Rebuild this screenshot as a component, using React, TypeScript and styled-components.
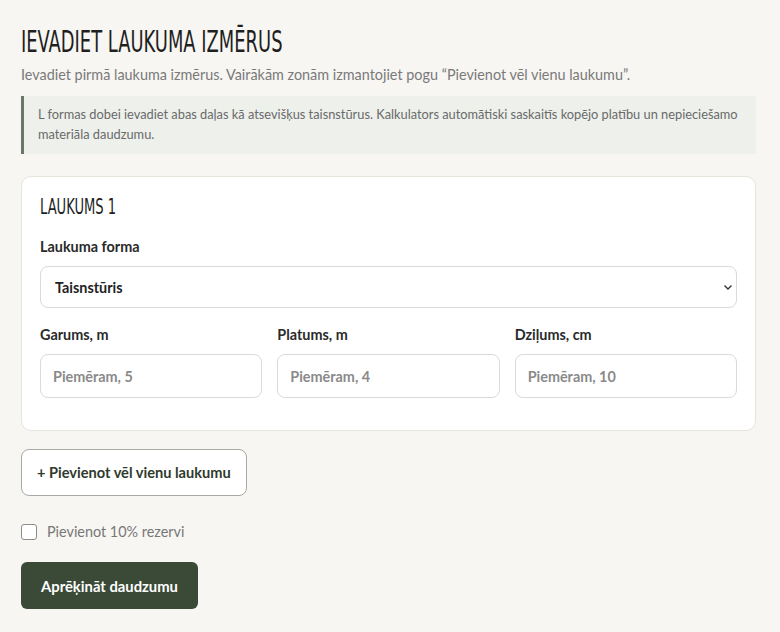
import React from "react";
import styled, { createGlobalStyle } from "styled-components";

const Global = createGlobalStyle`
  html, body { margin: 0; padding: 0; background: #f7f6f2; }
  body { font-family: Lato, "Open Sans", sans-serif; color: #2a2a2a; }
  * { box-sizing: border-box; }
`;

const Page = styled.div`
  padding: 23px 24px 24px 21px;
  width: 780px;
  display: flex;
  flex-direction: column;
`;

const Title = styled.h1`
  margin: 0;
  font-family: "DejaVu Sans Condensed", "DejaVu Sans", sans-serif;
  font-stretch: condensed;
  font-weight: 400;
  font-size: 31px;
  line-height: 37px;
  color: #1f1f1f;
`;

const Squeeze = styled.span<{ $x: number }>`
  display: inline-block;
  white-space: nowrap;
  transform: scaleX(${(p) => p.$x});
  transform-origin: left center;
`;

const Lead = styled.p`
  margin: 5px 0 0;
  font-size: 14.4px;
  line-height: 20px;
  color: #7a7a7a;
`;

const Notice = styled.div`
  margin-top: 11px;
  background: #edf0eb;
  border-left: 3px solid #6b7766;
  padding: 9px 16px 10px 14px;
  font-size: 12.8px;
  line-height: 19.5px;
  color: #6a6a6a;
`;

const Card = styled.section`
  margin-top: 22px;
  background: #fff;
  border: 1px solid #e7e4dd;
  border-radius: 10px;
  padding: 16px 18px 32px;
  display: flex;
  flex-direction: column;
`;

const CardTitle = styled.h2`
  margin: 0;
  font-family: "DejaVu Sans Condensed", "DejaVu Sans", sans-serif;
  font-stretch: condensed;
  font-weight: 400;
  font-size: 22px;
  line-height: 28px;
  color: #1f1f1f;
`;

const Field = styled.div<{ $top?: number }>`
  display: flex;
  flex-direction: column;
  gap: 9px;
  min-width: 0;
  margin-top: ${(p) => p.$top ?? 0}px;
`;

const Label = styled.label`
  font-size: 14.4px;
  font-weight: 700;
  line-height: 20px;
  color: #2a2a2a;
`;

const SelectBox = styled.div`
  position: relative;
  height: 42px;
  border: 1px solid #dcdad4;
  border-radius: 8px;
  display: flex;
  align-items: center;
  padding: 0 14px;
  font-size: 14.4px;
  font-weight: 700;
  color: #222;
`;

const Chevron = styled.svg`
  position: absolute;
  right: 3px;
  top: 50%;
  margin-top: -4px;
`;

const Grid = styled.div`
  display: grid;
  grid-template-columns: repeat(3, 1fr);
  gap: 15px;
  margin-top: 17px;
`;

const Input = styled.input`
  height: 44px;
  width: 100%;
  border: 1px solid #dcdad4;
  border-radius: 8px;
  padding: 0 12px;
  font-family: Lato, sans-serif;
  font-size: 14.4px;
  font-weight: 700;
  color: #222;
  background: #fff;
  outline: none;
  &::placeholder { color: #8a8a8a; }
`;

const OutlineButton = styled.button`
  margin-top: 18px;
  align-self: flex-start;
  height: 47px;
  padding: 0 15px;
  background: #fff;
  border: 1px solid #a9aaa4;
  border-radius: 8px;
  font-family: Lato, sans-serif;
  font-size: 14.6px;
  font-weight: 700;
  color: #2f3a2d;
`;

const CheckRow = styled.label`
  margin-top: 26px;
  display: flex;
  align-items: center;
  gap: 10px;
  font-size: 14.4px;
  color: #777;
  line-height: 20px;
`;

const Box = styled.span`
  width: 16px;
  height: 16px;
  border: 1px solid #8c8c8c;
  border-radius: 3px;
  background: #fff;
`;

const PrimaryButton = styled.button`
  margin-top: 20px;
  align-self: flex-start;
  height: 47px;
  padding: 0 20px;
  background: #3a4a37;
  border: none;
  border-radius: 6px;
  font-family: Lato, sans-serif;
  font-size: 14.8px;
  font-weight: 700;
  color: #fff;
`;

export default function App() {
  return (
    <>
      <Global />
      <Page>
        <Title><Squeeze $x={0.642}>IEVADIET LAUKUMA IZMĒRUS</Squeeze></Title>
        <Lead>Ievadiet pirmā laukuma izmērus. Vairākām zonām izmantojiet pogu “Pievienot vēl vienu laukumu”.</Lead>
        <Notice>
          L formas dobei ievadiet abas daļas kā atsevišķus taisnstūrus. Kalkulators automātiski saskaitīs kopējo platību un nepieciešamo materiāla daudzumu.
        </Notice>
        <Card>
          <CardTitle><Squeeze $x={0.663}>LAUKUMS 1</Squeeze></CardTitle>
          <Field $top={16}>
            <Label>Laukuma forma</Label>
            <SelectBox>
              Taisnstūris
              <Chevron width="10" height="8" viewBox="0 0 10 8">
                <path d="M1.5 2.5 L5 6 L8.5 2.5" fill="none" stroke="#333" strokeWidth="1.4" />
              </Chevron>
            </SelectBox>
          </Field>
          <Grid>
            <Field>
              <Label>Garums, m</Label>
              <Input placeholder="Piemēram, 5" />
            </Field>
            <Field>
              <Label>Platums, m</Label>
              <Input placeholder="Piemēram, 4" />
            </Field>
            <Field>
              <Label>Dziļums, cm</Label>
              <Input placeholder="Piemēram, 10" />
            </Field>
          </Grid>
        </Card>
        <OutlineButton>+ Pievienot vēl vienu laukumu</OutlineButton>
        <CheckRow>
          <Box />
          Pievienot 10% rezervi
        </CheckRow>
        <PrimaryButton>Aprēķināt daudzumu</PrimaryButton>
      </Page>
    </>
  );
}
